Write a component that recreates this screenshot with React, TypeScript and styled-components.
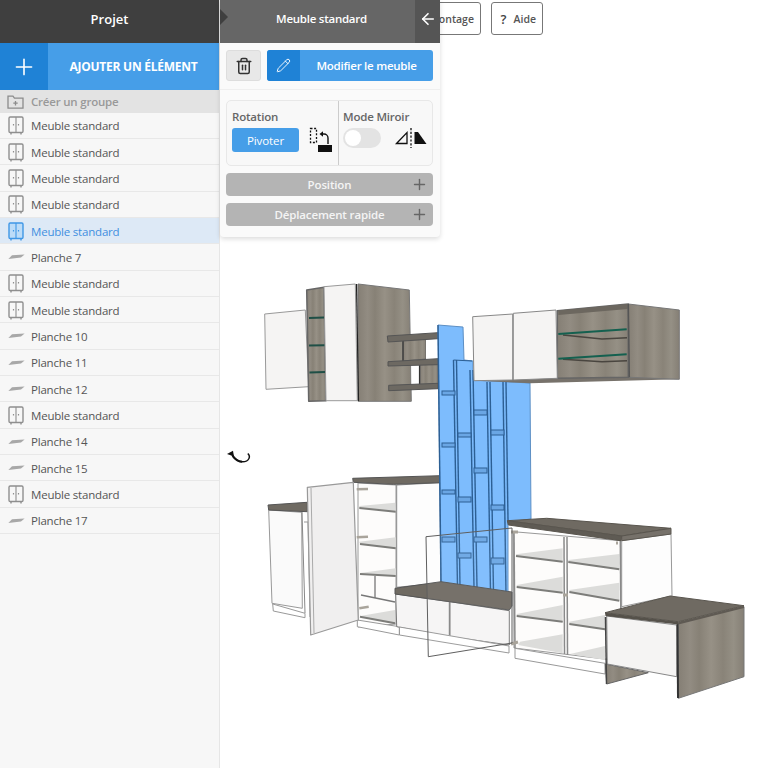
import React from "react";
import styled, { createGlobalStyle } from "styled-components";
import { Plus, Trash2, Pencil, ArrowLeft } from "lucide-react";

const items = [
  "Meuble standard", "Meuble standard", "Meuble standard", "Meuble standard", "Meuble standard",
  "Planche 7", "Meuble standard", "Meuble standard", "Planche 10", "Planche 11", "Planche 12",
  "Meuble standard", "Planche 14", "Planche 15", "Meuble standard", "Planche 17",
];

const App = () => (
  <>
    <GlobalStyle />
    <Page>
      <Sidebar>
        <SideHeader>Projet</SideHeader>
        <AddButton>
          <AddIcon><Plus size={26} strokeWidth={1.5} /></AddIcon>
          <AddLabel>AJOUTER UN ÉLÉMENT</AddLabel>
        </AddButton>
        <GroupRow>
          <FolderIcon />
          Créer un groupe
        </GroupRow>
        <List>
          {items.map((name, i) => (
            <Row key={i} $active={i === 4}>
              <RowIcon>{name.startsWith("Meuble") ? <CabinetIcon active={i === 4} /> : <PlankIcon />}</RowIcon>
              {name}
            </Row>
          ))}
        </List>
      </Sidebar>
      <Stage>
        <Scene />
        <Toolbar>
          <ToolButton $width={92}>Montage</ToolButton>
          <ToolButton $width={52}><Question>?</Question>Aide</ToolButton>
        </Toolbar>
        <RotateMark />
        <Panel>
          <PanelHeader>
            <Notch />
            <PanelTitle>Meuble standard</PanelTitle>
            <BackButton><ArrowLeft size={18} strokeWidth={2.2} /></BackButton>
          </PanelHeader>
          <Actions>
            <TrashButton><Trash2 size={18} strokeWidth={2} /></TrashButton>
            <EditButton>
              <EditIcon><Pencil size={15} strokeWidth={1.5} /></EditIcon>
              <EditLabel>Modifier le meuble</EditLabel>
            </EditButton>
          </Actions>
          <Controls>
            <ModeBox>
              <ModeCell $width={111}>
                <ModeTitle>Rotation</ModeTitle>
                <ModeBody>
                  <Pivot>Pivoter</Pivot>
                  <PivotIcon />
                </ModeBody>
              </ModeCell>
              <ModeCell $divider>
                <ModeTitle>Mode Miroir</ModeTitle>
                <ModeBody>
                  <Toggle><Knob /></Toggle>
                  <MirrorIcon />
                </ModeBody>
              </ModeCell>
            </ModeBox>
            <Collapse>Position<CollapsePlus><Plus size={17} strokeWidth={2} /></CollapsePlus></Collapse>
            <Collapse>Déplacement rapide<CollapsePlus><Plus size={17} strokeWidth={2} /></CollapsePlus></Collapse>
          </Controls>
        </Panel>
      </Stage>
    </Page>
  </>
);

const FolderIcon = () => (
  <svg width="17" height="14" viewBox="0 0 17 14" fill="none" stroke="#8c8c8c" strokeWidth="1.3" style={{ marginRight: 7 }}>
    <path d="M1 3V1.2h5l1.4 2H16v10H1z" />
    <path d="M8.5 6v4.4M6.3 8.2h4.4" />
  </svg>
);

const CabinetIcon = ({ active }: { active: boolean }) => {
  const c = active ? "#3f97e6" : "#8f8f8f";
  return (
    <svg width="16" height="19" viewBox="0 0 16 19" fill={active ? "#bcdcf8" : "none"} stroke={c} strokeWidth="1.4">
      <rect x="1" y="1" width="14" height="15.5" rx="1.2" />
      <path d="M8 1v15.5" strokeWidth="1.1" />
      <path d="M3 17v1.6M13 17v1.6" />
      <path d="M5.5 8v1.6M10.5 8v1.6" strokeWidth="1.2" />
    </svg>
  );
};

const PlankIcon = () => (
  <svg width="17" height="6" viewBox="0 0 17 6">
    <path d="M4 1.2 16.6 .4 13 3.4 .4 5z" fill="#a8a8a8" />
  </svg>
);

const PivotIcon = () => (
  <svg width="26" height="26" viewBox="0 0 26 26" fill="none" stroke="#111">
    <path d="M3.5 1.5h6v14h-6z" strokeWidth="1.3" strokeDasharray="2 1.6" />
    <path d="M15.5 7h1.5a4 4 0 0 1 4 4v6" strokeWidth="1.4" />
    <path d="M12.5 7 16 4.2v5.6z" fill="#111" stroke="none" />
    <rect x="11" y="18" width="14" height="7" fill="#111" stroke="none" />
  </svg>
);

const MirrorIcon = () => (
  <svg width="32" height="22" viewBox="0 0 32 22" fill="none" stroke="#111" strokeWidth="1.3">
    <path d="M1.5 16.5 12 5.5v11z" />
    <path d="M16 1v20" strokeDasharray="2.2 1.6" />
    <path d="M19.5 5H23l8.5 12H19.5z" fill="#111" stroke="none" />
  </svg>
);

const RotateMark = () => (
  <RotateSvg width="26" height="16" viewBox="0 0 26 16" fill="none" stroke="#111">
    <path d="M6 5.5C9 10 12.5 12.8 16.5 12.8c3 0 5.6-1.4 6.6-3.6.7-1.6.1-3.4-1.3-4.7" strokeWidth="1.4" />
    <path d="M6.5 7C9 10.5 12.5 12.6 16 12.8" strokeWidth="1.9" />
    <path d="M1 5 7 1.8 8 7.6z" fill="#111" stroke="none" />
  </RotateSvg>
);

const Poly = ({ p, f = "#fff", s = "#777", w = 1 }: { p: string; f?: string; s?: string; w?: number }) => (
  <polygon points={p} fill={f} stroke={s} strokeWidth={w} strokeLinejoin="round" />
);

const Edge = ({ p, s = "#666", w = 1 }: { p: string; s?: string; w?: number }) => (
  <polyline points={p} fill="none" stroke={s} strokeWidth={w} />
);

// glass shelf seen from above: pale top with a darker front edge
const Shelf = ({ top, front }: { top: string; front: string }) => (
  <>
    <polygon points={top} fill="#dcdcda" />
    <Edge p={front} s="#7d7d7a" w={2} />
  </>
);

const WOOD = "url(#wood)";
const TOP = "#6f6a62";
const DOOR = "#f5f4f3";
const BLUE = "#7dbcfd";
const BLUE_LINE = "#2c5f94";

const blueShelves: [number, number, number][] = [
  [442, 391, 4], [442, 443, 4], [442, 490, 4], [442, 537, 5],
  [458, 433, 4], [458, 497, 5], [458, 553, 5],
  [474, 410, 5], [474, 468, 5], [474, 537, 5],
  [491, 430, 5], [491, 505, 5], [491, 558, 6],
];

const Scene = () => (
  <SceneSvg width="548" height="768" viewBox="220 0 548 768">
    <defs>
      <linearGradient id="wood" x1="0" y1="0" x2="1" y2="0">
        <stop offset="0" stopColor="#857f75" />
        <stop offset=".18" stopColor="#928c82" />
        <stop offset=".32" stopColor="#878176" />
        <stop offset=".5" stopColor="#979186" />
        <stop offset=".68" stopColor="#898378" />
        <stop offset=".84" stopColor="#959085" />
        <stop offset="1" stopColor="#857f75" />
      </linearGradient>
    </defs>

    {/* upper left cabinet */}
    <Poly p="264.7,314 305.3,310 308.7,386.7 266,389.3" f={DOOR} s="#999" />
    <Poly p="306.7,290 324,287.3 326,400.7 308.7,401.3" f={WOOD} s="#666" w={1.5} />
    <Edge p="309,318 324,317.5" s="#1f4f46" w={2} />
    <Edge p="309,345.5 325,345.2" s="#1f4f46" w={2} />
    <Edge p="309.5,372.5 325,372" s="#1f4f46" w={2} />
    <Poly p="358,284 409.3,290 411.3,401.3 358,401.3" f={WOOD} s="#777" />
    <Poly p="324,286.7 355.3,284 357.3,400.7 326,400.7" f={DOOR} s="#999" />
    <Edge p="356.5,284 358.5,401" s="#222" w={1.2} />

    {/* bridge shelves */}
    <Poly p="403,340 426,338.5 426,359 403,361" f={WOOD} s="#666" />
    <Poly p="420,364.5 438,363.5 438,385 420,386" f={WOOD} s="#666" />
    <Poly p="426,338.5 438,338 438,358.5 426,359" f="#fff" s="none" />
    <Poly p="411.5,366 417,365.5 417,386 411.5,386" f="#fff" s="none" />
    <Edge p="403,341 403,361" s="#333" w={1.2} />
    <Edge p="419.5,365 419.5,386" s="#333" w={1.2} />
    <Poly p="387.3,336 438,332.7 438,338.7 388,342" f="#6d6962" s="#555" />
    <Poly p="388,361.7 438,358.7 438,364.7 388,366" f="#6d6962" s="#555" />
    <Poly p="388.7,385.3 438,383.3 438,388.7 388.7,390.7" f="#6d6962" s="#555" />

    {/* lower left cabinet */}
    <Poly p="268.7,510 301.7,512.3 302.3,608.3 272,603.3" f="#fafafa" s="#999" />
    <Poly p="272.7,604 305,613.3 305,617.7 273.3,611" f="#fff" s="#999" />
    <Edge p="302,512 305,613" s="#888" />
    <Edge p="304,522 308,522 310,617" s="#999" />
    <Poly p="268,505 307.3,502.3 307.3,511.7 268.7,510" f={TOP} s="#555" />

    {/* middle cabinet */}
    <Poly p="358,483 396,485 396,624 358,627" f="#fdfcfb" s="#999" />
    <Poly p="396.7,485 440,482.7 440.7,583 396.7,587.3" f="#fdfdfd" s="#888" />
    <Shelf top="359.3,506 395,502.7 395.7,511.7 359.3,508" front="359.3,508 395.7,511.7" />
    <Shelf top="359.3,541.7 395.7,537.3 395.7,548.3 360,544" front="360,544 395.7,548.3" />
    <Shelf top="360,573 395.7,568.3 395.7,576 360,574" front="360,574 395.7,576" />
    <Edge p="375,576 375,598" s="#888" w={1.5} />
    <Edge p="361,595 395,602" s="#777" w={1.5} />
    <Shelf top="361.7,615.7 395,610 395,623.3 360,616.7" front="360,616.7 395,623.3" />
    <Poly p="357.3,620 357.3,626.7 399.3,635 399.3,626.7" f="#fff" s="#999" />
    <Poly p="352.7,478.3 440,475.7 440,482.7 393.3,484.3 353.3,482.3" f={TOP} s="#555" />
    <Poly p="307.3,487.3 353.3,482.3 358.3,620 310.7,635" f="#f0efef" s="#999" w={1.2} />
    <Edge p="311,488 314,633" s="#aaa" />
    <Edge p="356.7,489.3 368,489" s="#a9a49b" w={2.5} />
    <Edge p="356.7,537.3 368,536.7" s="#a9a49b" w={2.5} />
    <Edge p="359.3,608.3 368.7,606.7" s="#a9a49b" w={2.5} />

    {/* blue panels */}
    <Poly p="438,325 463,327 464,360 473,361 473,380 530,383 531,519 508,522 508,595 441,582" f={BLUE} s="#5d8fc4" />
    <Edge p="438,325 441,582" s={BLUE_LINE} w={1.4} />
    <Edge p="453.5,360 457.5,587" s={BLUE_LINE} w={1.4} />
    <Edge p="456.5,360 460,587" s={BLUE_LINE} w={1.4} />
    <Edge p="453.5,360 472,361" s={BLUE_LINE} />
    <Edge p="470,370 474,588" s={BLUE_LINE} w={1.4} />
    <Edge p="473,370 477,588" s={BLUE_LINE} w={1.4} />
    <Edge p="487,382 490.5,592" s={BLUE_LINE} w={1.4} />
    <Edge p="490,382 493.5,592" s={BLUE_LINE} w={1.4} />
    <Edge p="503,382 506,596" s={BLUE_LINE} w={1.4} />
    <Edge p="506,382 508,520" s={BLUE_LINE} w={1.4} />
    {blueShelves.map(([x, y, h], i) => (
      <ShelfMark key={i} x={x} y={y} width={13} height={h} />
    ))}

    {/* counter */}
    <Poly p="395.7,594 449.3,601.7 449.3,636.7 396.7,626.7" f="#f6f5f5" s="#777" />
    <Poly p="450,601.7 509.3,610.7 509.3,645 450,636.7" f="#f6f5f5" s="#777" />
    <Poly p="399.5,627 509,646 509,653 399.5,635" f="#fff" s="#999" />
    <Poly p="395,588.3 441,581.7 512,592 512,606 509.3,610 395,594" f={TOP} s="#555" />

    {/* upper right cabinet */}
    <Poly p="474,380.7 530,383.3 679.3,379.3 629,375 557,377" f="#77726b" s="none" />
    <Poly p="557.3,310.7 628.3,304 628.3,377.3 557.3,378.3" f={WOOD} s="#666" w={1.5} />
    <Poly p="558.3,310.5 628,304 628,309 558.3,315" f="#6c675f" s="none" />
    <Edge p="563,335 602,339 627,337.7" s="#49453f" w={1.4} />
    <Edge p="563,359.3 602,361.7 627,360.7" s="#49453f" w={1.4} />
    <Edge p="558.3,334 626.7,329.3" s="#14604f" w={2} />
    <Edge p="558.3,358.7 626.7,354.3" s="#14604f" w={2} />
    <Poly p="628.3,304 679.3,310 679.3,379.3 629.3,377.3" f={WOOD} s="#777" />
    <Edge p="628.3,304 629.3,377.3" s="#555" w={1.5} />
    <Poly p="472.7,316.7 512.7,314 512.7,380 474,380.7" f={DOOR} s="#888" />
    <Poly p="513.3,313.3 556,310 557.3,378.3 513.3,380" f={DOOR} s="#888" />

    {/* right cabinet */}
    <Poly p="513.3,531.7 620.7,540.7 621,661 514,648" f="#fdfcfb" s="#999" />
    <Poly p="621.7,540.7 671,534 672,596 621.7,606.7" f="#fdfdfd" s="#999" />
    <Shelf top="516,554.3 562.7,548.3 562.7,561.7 516,556" front="516,556 562.7,561.7" />
    <Shelf top="568.3,560 619.3,554 619.3,569.3 568.3,562" front="568.3,562 619.3,569.3" />
    <Shelf top="516.7,585 562.7,576.7 562.7,592.7 516.7,587" front="516.7,587 562.7,592.7" />
    <Shelf top="569.3,590 619.3,582.7 619.3,600.7 569.3,592" front="569.3,592 619.3,600.7" />
    <Shelf top="516.7,614 562.7,605 562.7,621.7 516.7,616" front="516.7,616 562.7,621.7" />
    <Shelf top="569.3,621.7 605,615 605,629.3 569.3,624" front="569.3,624 605,629.3" />
    <Poly p="520,641.7 562.7,634.3 562.7,653.3 518.3,645" f="#dcdcda" s="none" />
    <Poly p="570,654 605,646 605,660" f="#dcdcda" s="none" />
    <Edge p="564,537 564.5,654" s="#8a8a8a" w={1.5} />
    <Edge p="567,537 567.5,655" s="#8a8a8a" w={1.5} />
    <Edge p="620.3,541 620.8,610" s="#8a8a8a" w={1.5} />
    <Edge p="514,532 515,648" s="#8a8a8a" w={1.5} />
    <Poly p="515,648.3 605,663.3 605,674 515,658.3" f="#fff" s="#999" />
    <Poly p="507.3,520.7 546.7,518.3 671,528.3 621.7,536" f={TOP} s="#5a564f" />
    <Poly p="507.3,520.7 621.7,536 621,540.7 508.3,525" f="#5f5b54" s="#5a564f" />
    <Poly p="621.7,536 671,528.3 671,534 621.7,540.7" f="#76716a" s="#5a564f" />
    <Edge p="511,532 518,532" s="#a9a49b" w={3} />
    <Edge p="511,644 518,642" s="#a9a49b" w={3} />
    <Edge p="563,595 568,595" s="#a9a49b" w={3} />
    <Edge p="616,543 618,543" s="#a9a49b" w={3} />

    {/* glass door */}
    <Poly p="426,536.7 512,528 512,643 428.3,656.7" f="rgba(255,255,255,.05)" s="#5f5f5f" />

    {/* side table */}
    <Poly p="605.3,664 648.3,672.7 606.7,684" f={WOOD} s="#666" />
    <Poly p="606.7,616 676.7,625 676.7,676.7 607.3,664" f={DOOR} s="#888" />
    <Poly p="678.3,623.3 744,606.7 744,676.7 678.3,698.3" f={WOOD} s="#777" />
    <Edge p="677.5,622 678,698" s="#333" w={2} />
    <Edge p="605.5,617 606.5,684" s="#444" w={1.5} />
    <Poly p="605,612.7 670,596 744,605.7 678.3,621.7" f={TOP} s="#5a564f" />
    <Poly p="605,612.7 678.3,621.7 678.3,624.5 605.5,616" f="#55514a" s="none" />
    <Poly p="678.3,621.7 744,605.7 744,608 678.3,624.5" f="#5f5a53" s="none" />
  </SceneSvg>
);

const GlobalStyle = createGlobalStyle`
  html, body {
    margin: 0;
    padding: 0;
    background: #fff;
    font-family: "Open Sans", "Noto Sans", sans-serif;
  }
  * { box-sizing: border-box; }
`;

const Page = styled.div`
  display: flex;
  width: 768px;
  height: 768px;
  overflow: hidden;
`;

const Sidebar = styled.aside`
  width: 220px;
  flex: none;
  background: #f7f7f7;
  border-right: 1px solid #e6e6e6;
`;

const SideHeader = styled.div`
  height: 43px;
  background: #3f3f3f;
  color: #fff;
  font-size: 13px;
  font-weight: 600;
  display: flex;
  align-items: center;
  justify-content: center;
  padding-bottom: 5px;
`;

const AddButton = styled.div`
  height: 47px;
  display: flex;
  background: #469ee8;
  color: #fff;
`;

const AddIcon = styled.div`
  width: 48px;
  background: #1f82d6;
  display: flex;
  align-items: center;
  justify-content: center;
`;

const AddLabel = styled.div`
  flex: 1;
  display: flex;
  align-items: center;
  justify-content: center;
  font-size: 12px;
  font-weight: 700;
  letter-spacing: -0.25px;
`;

const GroupRow = styled.div`
  height: 23px;
  display: flex;
  align-items: center;
  padding-left: 7px;
  background: #e3e3e3;
  color: #999;
  font-size: 11.5px;
  font-weight: 600;
  letter-spacing: -0.2px;
`;

const List = styled.div`
  display: flex;
  flex-direction: column;
  margin-top: -0.4px;
`;

const Row = styled.div<{ $active?: boolean }>`
  height: 26.33px;
  display: flex;
  align-items: center;
  padding-top: 1px;
  font-size: 11.5px;
  letter-spacing: -0.2px;
  color: ${(p) => (p.$active ? "#3f8fe0" : "#555")};
  background: ${(p) => (p.$active ? "#dde9f6" : "transparent")};
  border-bottom: 1px solid #e8e8e8;
`;

const RowIcon = styled.div`
  width: 31px;
  padding-left: 8px;
  display: flex;
  align-items: center;
`;

const Stage = styled.main`
  position: relative;
  flex: 1;
  background: #fff;
`;

const SceneSvg = styled.svg`
  position: absolute;
  left: 0;
  top: 0;
`;

const Toolbar = styled.div`
  position: relative;
  display: flex;
  gap: 10px;
  padding: 2px 0 0 169px;
`;

const ToolButton = styled.div<{ $width: number }>`
  width: ${(p) => p.$width}px;
  height: 33px;
  padding-right: 6px;
  border: 1px solid #777;
  border-radius: 3px;
  background: #fff;
  color: #555;
  font-size: 10.5px;
  font-weight: 600;
  display: flex;
  align-items: center;
  justify-content: flex-end;
`;

const Question = styled.span`
  font-size: 13px;
  margin-right: 7px;
  color: #444;
`;

const RotateSvg = styled.svg`
  position: absolute;
  left: 6px;
  top: 449px;
`;

const Panel = styled.section`
  position: absolute;
  left: 0;
  top: 0;
  width: 220px;
  background: #fafafa;
  border-radius: 0 0 4px 4px;
  box-shadow: 0 2px 5px rgba(0, 0, 0, 0.14);
`;

const PanelHeader = styled.div`
  position: relative;
  height: 43px;
  background: #666;
  color: #fff;
  display: flex;
`;

const Notch = styled.div`
  position: absolute;
  left: 0;
  top: 9px;
  border-left: 8px solid #3f3f3f;
  border-top: 8px solid transparent;
  border-bottom: 8px solid transparent;
`;

const PanelTitle = styled.div`
  flex: 1;
  display: flex;
  align-items: center;
  justify-content: center;
  font-size: 11.5px;
  font-weight: 600;
  letter-spacing: -0.25px;
  padding: 0 0 6px 8px;
`;

const BackButton = styled.div`
  width: 25px;
  background: #555;
  display: flex;
  align-items: center;
  justify-content: center;
  padding-bottom: 6px;
`;

const Actions = styled.div`
  display: flex;
  gap: 6px;
  padding: 7px 7px 8px 6px;
  border-bottom: 1px solid #efefef;
`;

const TrashButton = styled.div`
  width: 35px;
  height: 31px;
  background: #e8e8e8;
  border: 1px solid #ddd;
  border-radius: 3px;
  color: #333;
  display: flex;
  align-items: center;
  justify-content: center;
`;

const EditButton = styled.div`
  flex: 1;
  height: 31px;
  display: flex;
  background: #469ee8;
  color: #fff;
  border-radius: 3px;
  overflow: hidden;
`;

const EditIcon = styled.div`
  width: 33px;
  background: #1f82d6;
  display: flex;
  align-items: center;
  justify-content: center;
`;

const EditLabel = styled.div`
  flex: 1;
  display: flex;
  align-items: center;
  justify-content: center;
  font-size: 11.5px;
  font-weight: 600;
  letter-spacing: -0.25px;
`;

const Controls = styled.div`
  display: flex;
  flex-direction: column;
  gap: 7px;
  padding: 10px 7px 11px 6px;
`;

const ModeBox = styled.div`
  height: 66px;
  display: flex;
  border: 1px solid #e8e8e8;
  border-radius: 5px;
  background: #f8f8f8;
`;

const ModeCell = styled.div<{ $width?: number; $divider?: boolean }>`
  ${(p) => (p.$width ? `width: ${p.$width}px;` : "flex: 1;")}
  ${(p) => (p.$divider ? "border-left: 1px solid #ccc;" : "")}
  padding: 8px 5px 0 ${(p) => (p.$divider ? 4 : 5)}px;
`;

const ModeTitle = styled.div`
  font-size: 11.5px;
  font-weight: 600;
  letter-spacing: -0.2px;
  line-height: 16px;
  color: #666;
`;

const ModeBody = styled.div`
  display: flex;
  align-items: center;
  justify-content: space-between;
  margin-top: 2px;
`;

const Pivot = styled.div`
  width: 67px;
  height: 24px;
  border-radius: 3px;
  background: #469ee8;
  color: #fff;
  font-size: 11.5px;
  letter-spacing: -0.1px;
  display: flex;
  align-items: center;
  justify-content: center;
`;

const Toggle = styled.div`
  width: 38px;
  height: 20px;
  border-radius: 10px;
  background: #e3e3e3;
  padding: 2px;
`;

const Knob = styled.div`
  width: 16px;
  height: 16px;
  border-radius: 50%;
  background: #fff;
`;

const Collapse = styled.div`
  position: relative;
  height: 23px;
  border-radius: 4px;
  background: #b4b4b4;
  color: #f4f4f4;
  font-size: 11.5px;
  font-weight: 600;
  letter-spacing: -0.15px;
  display: flex;
  align-items: center;
  justify-content: center;
`;

const CollapsePlus = styled.span`
  position: absolute;
  right: 5px;
  top: 3px;
  color: #666;
  display: flex;
`;

const ShelfMark = styled.rect`
  fill: #6aa6e4;
  stroke: ${BLUE_LINE};
  stroke-width: 1;
`;

export default App;
